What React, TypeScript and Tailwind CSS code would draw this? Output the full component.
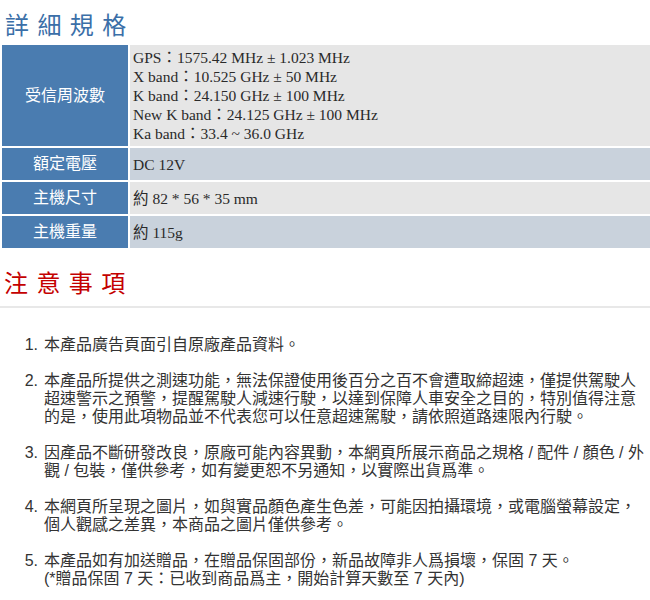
import React from "react";

const SERIF = "font-['Liberation_Serif','Noto_Sans_CJK_TC',serif]";
const SANS = "font-['Liberation_Sans','Noto_Sans_CJK_TC',sans-serif]";

const specs = [
  {
    label: "受信周波數",
    values: [
      "GPS：1575.42 MHz ± 1.023 MHz",
      "X band：10.525 GHz ± 50 MHz",
      "K band：24.150 GHz ± 100 MHz",
      "New K band：24.125 GHz ± 100 MHz",
      "Ka band：33.4 ~ 36.0 GHz",
    ],
    bg: "bg-[#e6e6e6]",
    tall: true,
  },
  { label: "額定電壓", values: ["DC 12V"], bg: "bg-[#c9d2dc]" },
  { label: "主機尺寸", values: ["約 82 * 56 * 35 mm"], bg: "bg-[#e6e6e6]" },
  { label: "主機重量", values: ["約 115g"], bg: "bg-[#c9d2dc]" },
];

const notes = [
  ["本產品廣告頁面引自原廠產品資料。"],
  [
    "本產品所提供之測速功能，無法保證使用後百分之百不會遭取締超速，僅提供駕駛人",
    "超速警示之預警，提醒駕駛人減速行駛，以達到保障人車安全之目的，特別值得注意",
    "的是，使用此項物品並不代表您可以任意超速駕駛，請依照道路速限內行駛。",
  ],
  [
    "因產品不斷研發改良，原廠可能內容異動，本網頁所展示商品之規格 / 配件 / 顏色 / 外",
    "觀 / 包裝，僅供參考，如有變更恕不另通知，以實際出貨爲準。",
  ],
  [
    "本網頁所呈現之圖片，如與實品顏色產生色差，可能因拍攝環境，或電腦螢幕設定，",
    "個人觀感之差異，本商品之圖片僅供參考。",
  ],
  [
    "本產品如有加送贈品，在贈品保固部份，新品故障非人爲損壞，保固 7 天。",
    "(*贈品保固 7 天：已收到商品爲主，開始計算天數至 7 天內)",
  ],
];

export default function App() {
  return (
    <div className={`w-[650px] h-[600px] bg-white overflow-hidden ${SANS}`}>
      {/* 詳細規格 */}
      <h2 className="pt-[12px] pl-[5px] text-[24px] leading-[24px] tracking-[1.5px] text-[#3b6fa8] font-['Noto_Sans_CJK_TC',sans-serif]">
        詳 細 規 格
      </h2>

      <div className="mt-[9px] pl-[2px] grid grid-cols-[126px_1fr] gap-[2px]">
        {specs.map((row) => (
          <React.Fragment key={row.label}>
            <div
              className={`bg-[#4a7cb0] text-white text-[16px] flex items-center justify-center ${
                row.tall ? "h-[101px]" : "h-[32px]"
              }`}
            >
              {row.label}
            </div>
            <div
              className={`${row.bg} ${SERIF} text-[15.5px] leading-[19px] text-[#2a2a2a] pl-[3px] flex flex-col justify-center whitespace-nowrap`}
            >
              {row.values.map((v) => (
                <div key={v}>{v}</div>
              ))}
            </div>
          </React.Fragment>
        ))}
      </div>

      {/* 注意事項 */}
      <h2 className="mt-[22px] pl-[4px] text-[24px] leading-[24px] tracking-[1.5px] text-[#c40000] font-['Noto_Sans_CJK_TC',sans-serif]">
        注 意 事 項
      </h2>
      <div className="mt-[12px] h-[2px] bg-[#e8e8e8]" />

      <ol className="mt-[28px] text-[16px] leading-[18px] text-[#333]">
        {notes.map((lines, i) => (
          <li key={i} className="mb-[18px] flex whitespace-nowrap">
            <span className="w-[38px] shrink-0 text-right">{i + 1}.</span>
            <span className="ml-[6px]">
              {lines.map((l, j) => (
                <React.Fragment key={j}>
                  {j > 0 && <br />}
                  {l}
                </React.Fragment>
              ))}
            </span>
          </li>
        ))}
      </ol>
    </div>
  );
}
